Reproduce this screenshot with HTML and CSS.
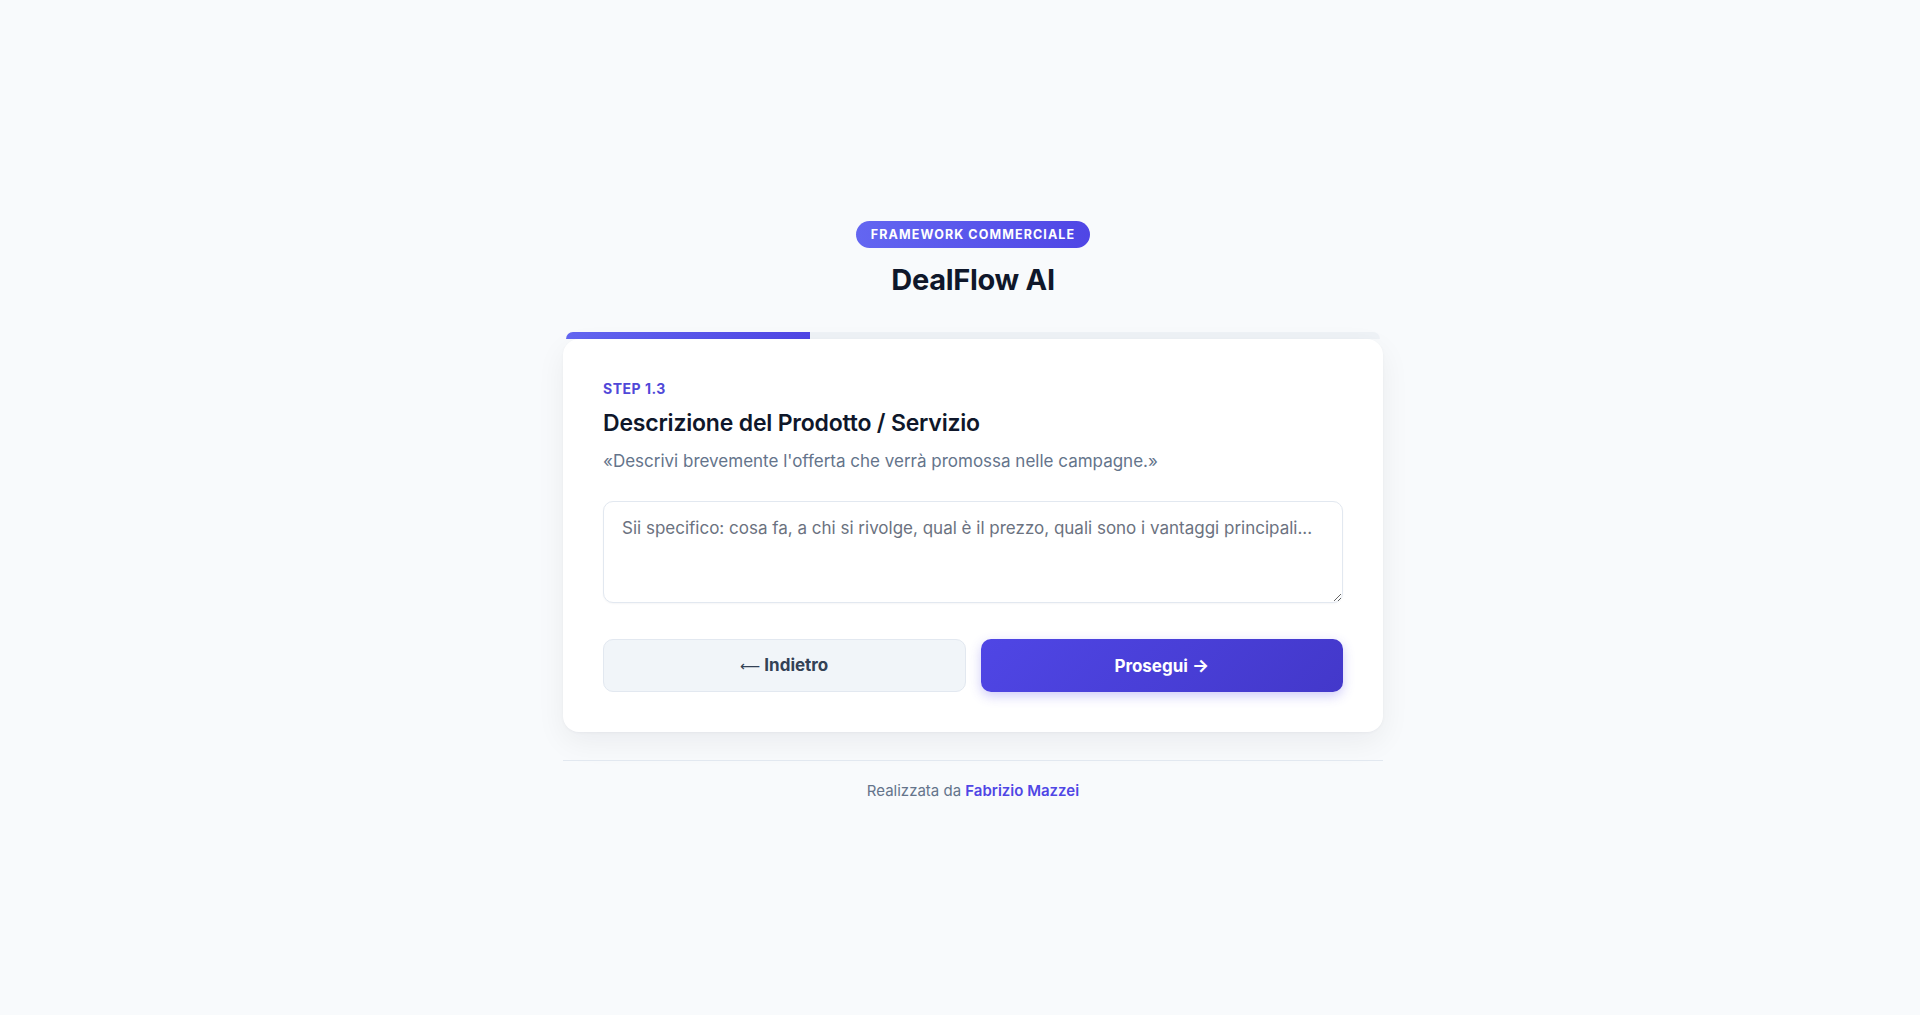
FILE: index.html
```html
<!DOCTYPE html>
<html lang="it">
<head>
<meta charset="utf-8">
<title>DealFlow AI</title>
<link rel="stylesheet" href="styles.css">
</head>
<body>
<main class="page">
  <div class="container">
    <header class="header">
      <span class="badge">Framework Commerciale</span>
      <h1 class="title">DealFlow AI</h1>
    </header>
    <div class="progress"><div class="progress-fill" style="width: 30%"></div></div>
    <section class="card">
      <div class="step">Step 1.3</div>
      <h2 class="question">Descrizione del Prodotto / Servizio</h2>
      <p class="hint">«Descrivi brevemente l'offerta che verrà promossa nelle campagne.»</p>
      <textarea class="answer" placeholder="Sii specifico: cosa fa, a chi si rivolge, qual è il prezzo, quali sono i vantaggi principali..."></textarea>
      <div class="actions">
        <button class="btn btn-back" type="button"><span class="arrow-back">⟵</span> Indietro</button>
        <button class="btn btn-next" type="button">Prosegui <span class="arrow-next">→</span></button>
      </div>
    </section>
    <footer class="footer">Realizzata da <a class="author" href="#">Fabrizio Mazzei</a></footer>
  </div>
</main>
</body>
</html>
```

FILE: styles.css
```css
* { box-sizing: border-box; }
html, body { margin: 0; padding: 0; }
body {
  background: #f8fafc;
  font-family: "Inter", "Noto Sans", "Liberation Sans", sans-serif;
  color: #0f172a;
}
.page {
  min-height: 100vh;
  display: flex;
  align-items: center;
  justify-content: center;
  padding: 6px 0 0 26px;
}
.container {
  width: 820px;
}
.header {
  display: flex;
  flex-direction: column;
  align-items: center;
  margin-bottom: 34px;
}
.badge {
  display: inline-block;
  padding: 7px 15px;
  border-radius: 999px;
  background: linear-gradient(90deg, #6366f1, #4f46e5);
  color: #ffffff;
  font-size: 12.5px;
  line-height: 13px;
  font-weight: 700;
  letter-spacing: 1.1px;
  text-transform: uppercase;
}
.title {
  margin: 14px 0 0;
  font-size: 29px;
  line-height: 36px;
  font-weight: 700;
  letter-spacing: -0.3px;
  color: #0f172a;
}
.progress {
  height: 7px;
  margin: 0 3px;
  background: #eef2f6;
  border-radius: 10px 10px 0 0;
  overflow: hidden;
}
.progress-fill {
  height: 100%;
  background: linear-gradient(90deg, #6366f1, #4f46e5);
}
.card {
  background: #ffffff;
  border-radius: 16px;
  padding: 40px;
  box-shadow: 0 10px 30px rgba(15, 23, 42, 0.06), 0 1px 3px rgba(15, 23, 42, 0.04);
}
.step {
  font-size: 14px;
  line-height: 20px;
  font-weight: 700;
  letter-spacing: 0.5px;
  text-transform: uppercase;
  color: #5048d8;
}
.question {
  margin: 9px 0 0;
  font-size: 23px;
  line-height: 30px;
  font-weight: 600;
  letter-spacing: -0.2px;
  color: #0f172a;
}
.hint {
  margin: 11px 0 0;
  font-size: 17px;
  line-height: 25px;
  color: #64748b;
}
.answer {
  display: block;
  width: 100%;
  height: 102px;
  margin-top: 27px;
  padding: 14px 18px;
  border: 1px solid #e2e8f0;
  border-radius: 10px;
  background: #ffffff;
  font-family: inherit;
  font-size: 17px;
  line-height: 25px;
  color: #0f172a;
  resize: vertical;
  box-shadow: 0 1px 2px rgba(15, 23, 42, 0.04);
  outline: none;
}
.answer::placeholder { color: #6b7280; }
.actions {
  display: grid;
  grid-template-columns: 1fr 1fr;
  gap: 15px;
  margin-top: 36px;
}
.btn {
  height: 53px;
  border-radius: 10px;
  font-family: inherit;
  font-size: 17px;
  font-weight: 700;
  cursor: pointer;
}
.btn-back {
  background: #f1f5f9;
  border: 1px solid #e2e8f0;
  color: #334155;
}
.arrow-back {
  font-family: "DejaVu Sans", sans-serif;
  font-weight: 400;
  font-size: 14px;
}
.btn-next {
  border: none;
  background: linear-gradient(135deg, #4f46e5, #4338ca);
  color: #ffffff;
  box-shadow: 0 4px 12px rgba(79, 70, 229, 0.28);
}
.arrow-next {
  font-size: 18px;
}
.footer {
  margin-top: 28px;
  padding-top: 20px;
  border-top: 1px solid #e2e8f0;
  text-align: center;
  font-size: 15px;
  line-height: 20px;
  color: #64748b;
}
.author {
  color: #4f46e5;
  font-weight: 600;
  text-decoration: none;
}
```
